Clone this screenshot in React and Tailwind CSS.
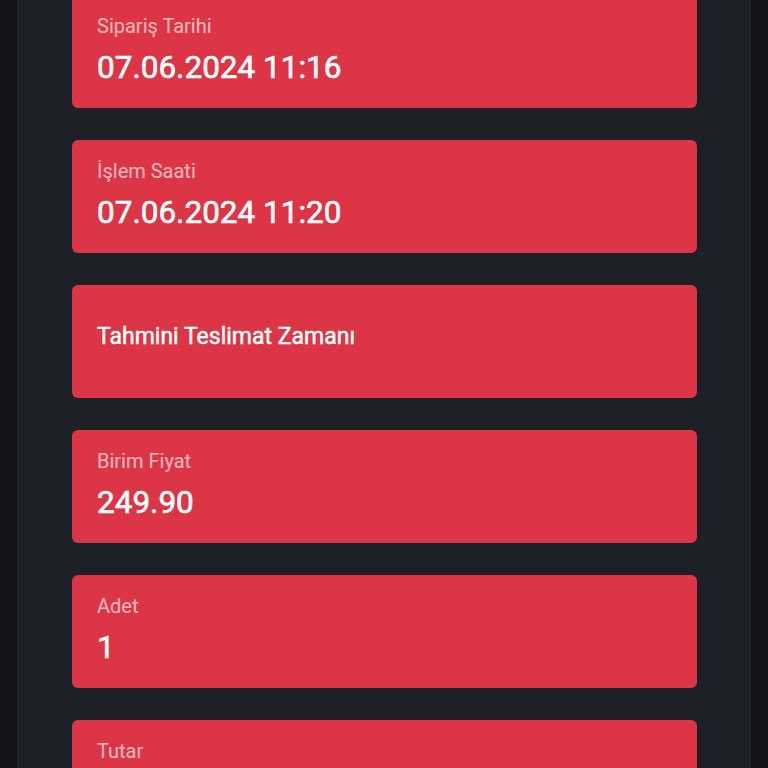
const ROWS = [
  { label: 'Sipariş Tarihi', value: '07.06.2024 11:16' },
  { label: 'İşlem Saati', value: '07.06.2024 11:20' },
  { title: 'Tahmini Teslimat Zamanı' },
  { label: 'Birim Fiyat', value: '249.90' },
  { label: 'Adet', value: '1' },
  { label: 'Tutar', value: '249.90' },
]

// no Roboto Medium installed: regular glyphs + a thin stroke give the same weight/width
function InfoCard({ row }) {
  if (row.title) {
    return (
      <div className="h-[113px] shrink-0 rounded-[6px] bg-[#dc3545] px-[25px] pt-[37px]">
        <div className="text-[23px] leading-[30px] text-white [-webkit-text-stroke:0.45px_white]">{row.title}</div>
      </div>
    )
  }
  return (
    <div className="h-[113px] shrink-0 rounded-[6px] bg-[#dc3545] px-[25px] pt-[17px]">
      <div className="text-[20px] leading-[28px] text-white/65">{row.label}</div>
      <div className="mt-[9px] text-[31.5px] leading-[38px] text-white [-webkit-text-stroke:0.6px_white]">{row.value}</div>
    </div>
  )
}

export default function App() {
  return (
    <div className="h-screen w-full overflow-hidden bg-[#141519] px-[17px]" style={{ fontFamily: 'Roboto, "Noto Sans", sans-serif' }}>
      <div className="h-full overflow-hidden bg-[#1d2027] pl-[55px] pr-[54px]">
        <div className="flex flex-col gap-[32px] -mt-[5px]">
          {ROWS.map((row, i) => (
            <InfoCard key={i} row={row} />
          ))}
        </div>
      </div>
    </div>
  )
}
